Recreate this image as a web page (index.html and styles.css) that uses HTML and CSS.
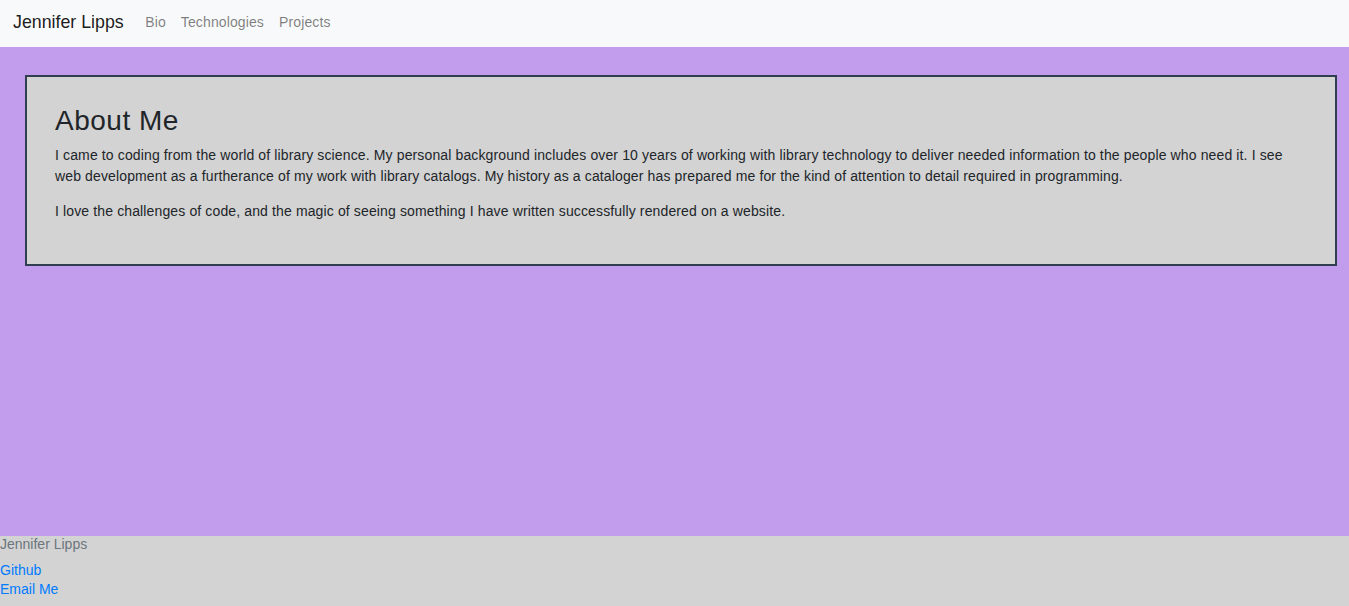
FILE: index.html
```html
<!DOCTYPE html>
<html lang="en">
<head>
<meta charset="utf-8">
<title>Jennifer Lipps</title>
<link rel="stylesheet" href="styles.css">
</head>
<body>
<nav class="navbar">
  <a class="brand" href="#">Jennifer Lipps</a>
  <ul class="nav-links">
    <li><a href="#">Bio</a></li>
    <li><a href="#">Technologies</a></li>
    <li><a href="#">Projects</a></li>
  </ul>
</nav>
<main class="main">
  <section class="about">
    <h1>About Me</h1>
    <p>I came to coding from the world of library science. My personal background includes over 10 years of working with library technology to deliver needed information to the people who need it. I see web development as a furtherance of my work with library catalogs. My history as a cataloger has prepared me for the kind of attention to detail required in programming.</p>
    <p>I love the challenges of code, and the magic of seeing something I have written successfully rendered on a website.</p>
  </section>
</main>
<footer class="footer">
  <div class="footer-name">Jennifer Lipps</div>
  <div class="footer-links">
    <a href="#">Github</a>
    <a href="#">Email Me</a>
  </div>
</footer>
</body>
</html>
```

FILE: styles.css
```css
* { box-sizing: border-box; }
html, body { margin: 0; padding: 0; }
body {
  font-family: "Liberation Sans", Arial, sans-serif;
  font-size: 14px;
  line-height: 1.5;
  color: #212529;
  background: #d3d3d3;
}
a { text-decoration: none; }

.navbar {
  height: 47px;
  background: #f8f9fa;
  display: flex;
  align-items: center;
  padding: 0 13px;
}
.brand {
  font-size: 17.8px;
  color: rgba(0,0,0,0.9);
  margin-right: 14px;
  line-height: 27px;
  margin-top: -3px;
}
.nav-links {
  list-style: none;
  margin: -2px 0 0;
  padding: 0;
  display: flex;
}
.nav-links a {
  display: block;
  padding: 0 7.5px;
  color: rgba(0,0,0,0.5);
  font-size: 14px;
  letter-spacing: 0.12px;
  line-height: 21px;
}

.main {
  background: #c39ded;
  height: 489px;
  padding: 28px 12px 0 25px;
}
.about {
  background: #d3d3d3;
  border: 2px solid #2f3f4f;
  padding: 27px 28px 28px;
}
.about h1 {
  margin: 0 0 7px;
  font-size: 28px;
  letter-spacing: 0.5px;
  font-weight: 500;
  line-height: 1.2;
}
.about p {
  margin: 0 0 14px;
  letter-spacing: 0.13px;
}

.footer {
  height: 70px;
  padding: 0;
}
.footer-name {
  color: #6c757d;
  line-height: 16px;
}
.footer-links {
  margin-top: 9px;
  display: flex;
  flex-direction: column;
}
.footer-links a {
  color: #007bff;
  line-height: 19px;
}
```
